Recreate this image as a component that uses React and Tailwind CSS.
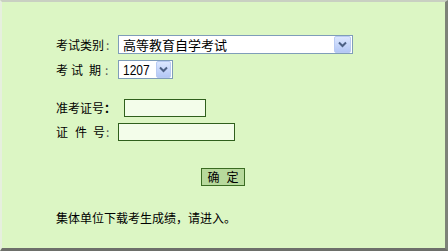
import React from 'react'

const CJK = "font-['SimSun','Noto_Sans_CJK_SC',sans-serif]"

function Chevron() {
  return (
    <div className="ml-auto mr-[1px] flex h-[17px] w-[17px] items-center justify-center rounded-[2px] border border-[#b9cbf3] bg-gradient-to-b from-[#dce7ff] to-[#b3c7f5]">
      <svg width="9" height="7" viewBox="0 0 9 7">
        <path d="M1 1.5 L4.5 5 L8 1.5" fill="none" stroke="#4d6185" strokeWidth="2" />
      </svg>
    </div>
  )
}

function Select({ width, children }) {
  return (
    <div className={`flex h-[19px] ${width} items-center border border-[#7f9db9] bg-white`}>
      <span className="pl-[4px] leading-none">{children}</span>
      <Chevron />
    </div>
  )
}

export default function App() {
  return (
    <div className={`h-[251px] w-[448px] overflow-hidden border-t-2 border-l-2 border-r-[3px] border-b-[3px] border-t-[#c9d0c2] border-l-[#e6efde] border-r-[#7d8278] border-b-[#6d6f6a] bg-[#dcf6c4] pl-[54px] pt-[33px] text-[12px] text-black ${CJK}`}>
      <div className="flex items-center">
        <span className="w-[62px]">考试类别<span className="ml-[2px] text-[#555]">:</span></span>
        <Select width="w-[235px]">
          <span className="text-[13px]">高等教育自学考试</span>
        </Select>
      </div>
      <div className="mt-[6px] flex items-center">
        <span className="flex w-[62px]">
          <span>考</span>
          <span className="ml-[3px]">试</span>
          <span className="ml-[6px]">期</span>
          <span className="ml-[4px] text-[#555]">:</span>
        </span>
        <Select width="w-[55px]">
          <span className="inline-block origin-left scale-x-[0.8] font-['Liberation_Sans',sans-serif] text-[15px]">1207</span>
        </Select>
      </div>

      <div className="mt-[20px] flex items-center">
        <span className="w-[68px]">准考证号<span className="font-bold">：</span></span>
        <div className="h-[18px] w-[82px] border border-[#2f5f1c] bg-[#f3fdea]" />
      </div>
      <div className="mt-[6px] flex items-center">
        <span className="flex w-[62px]">
          <span>证</span>
          <span className="ml-[7px]">件</span>
          <span className="ml-[6px]">号</span>
          <span className="ml-[1px] text-[#555]">:</span>
        </span>
        <div className="h-[18px] w-[117px] border border-[#2f5f1c] bg-[#f3fdea]" />
      </div>

      <div className="mt-[27px] pl-[145px]">
        <button className="flex h-[18px] w-[44px] items-center justify-center border border-[#3a6b22] bg-[#b7d99c] text-[12px] leading-none">
          确<span className="ml-[7px]">定</span>
        </button>
      </div>

      <p className="mt-[23px]">集体单位下载考生成绩，请进入。</p>
    </div>
  )
}
